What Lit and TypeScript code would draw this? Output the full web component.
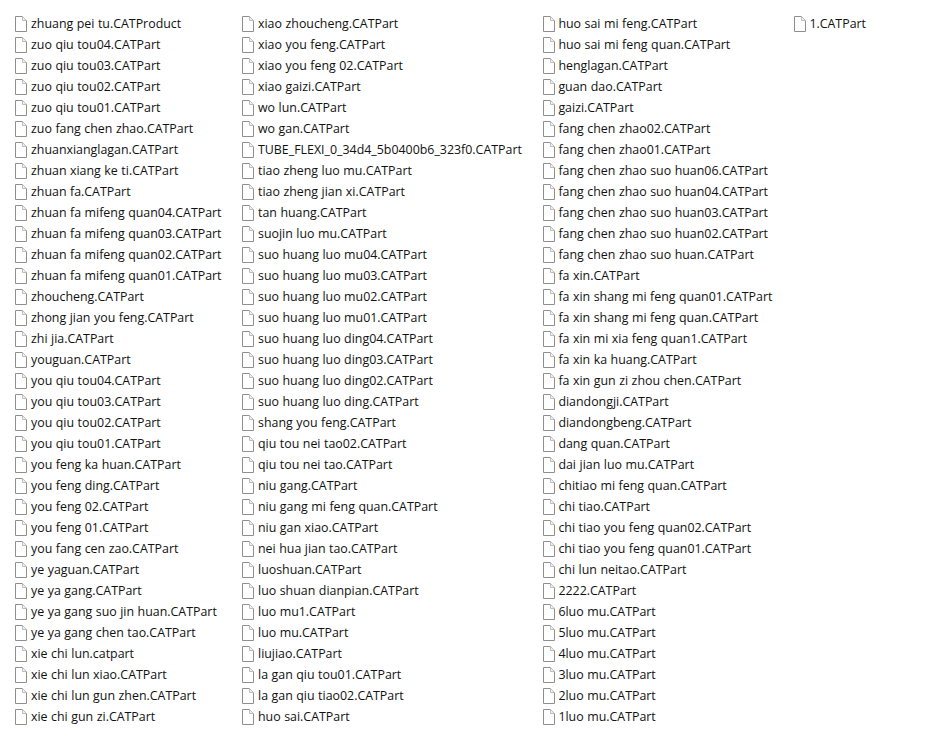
import { LitElement, html, css } from "lit";
import { customElement } from "lit/decorators.js";

const columns: string[][] = [
  ["zhuang pei tu.CATProduct","zuo qiu tou04.CATPart","zuo qiu tou03.CATPart","zuo qiu tou02.CATPart","zuo qiu tou01.CATPart","zuo fang chen zhao.CATPart","zhuanxianglagan.CATPart","zhuan xiang ke ti.CATPart","zhuan fa.CATPart","zhuan fa mifeng quan04.CATPart","zhuan fa mifeng quan03.CATPart","zhuan fa mifeng quan02.CATPart","zhuan fa mifeng quan01.CATPart","zhoucheng.CATPart","zhong jian you feng.CATPart","zhi jia.CATPart","youguan.CATPart","you qiu tou04.CATPart","you qiu tou03.CATPart","you qiu tou02.CATPart","you qiu tou01.CATPart","you feng ka huan.CATPart","you feng ding.CATPart","you feng 02.CATPart","you feng 01.CATPart","you fang cen zao.CATPart","ye yaguan.CATPart","ye ya gang.CATPart","ye ya gang suo jin huan.CATPart","ye ya gang chen tao.CATPart","xie chi lun.catpart","xie chi lun xiao.CATPart","xie chi lun gun zhen.CATPart","xie chi gun zi.CATPart"],
  ["xiao zhoucheng.CATPart","xiao you feng.CATPart","xiao you feng 02.CATPart","xiao gaizi.CATPart","wo lun.CATPart","wo gan.CATPart","TUBE_FLEXI_0_34d4_5b0400b6_323f0.CATPart","tiao zheng luo mu.CATPart","tiao zheng jian xi.CATPart","tan huang.CATPart","suojin luo mu.CATPart","suo huang luo mu04.CATPart","suo huang luo mu03.CATPart","suo huang luo mu02.CATPart","suo huang luo mu01.CATPart","suo huang luo ding04.CATPart","suo huang luo ding03.CATPart","suo huang luo ding02.CATPart","suo huang luo ding.CATPart","shang you feng.CATPart","qiu tou nei tao02.CATPart","qiu tou nei tao.CATPart","niu gang.CATPart","niu gang mi feng quan.CATPart","niu gan xiao.CATPart","nei hua jian tao.CATPart","luoshuan.CATPart","luo shuan dianpian.CATPart","luo mu1.CATPart","luo mu.CATPart","liujiao.CATPart","la gan qiu tou01.CATPart","la gan qiu tiao02.CATPart","huo sai.CATPart"],
  ["huo sai mi feng.CATPart","huo sai mi feng quan.CATPart","henglagan.CATPart","guan dao.CATPart","gaizi.CATPart","fang chen zhao02.CATPart","fang chen zhao01.CATPart","fang chen zhao suo huan06.CATPart","fang chen zhao suo huan04.CATPart","fang chen zhao suo huan03.CATPart","fang chen zhao suo huan02.CATPart","fang chen zhao suo huan.CATPart","fa xin.CATPart","fa xin shang mi feng quan01.CATPart","fa xin shang mi feng quan.CATPart","fa xin mi xia feng quan1.CATPart","fa xin ka huang.CATPart","fa xin gun zi zhou chen.CATPart","diandongji.CATPart","diandongbeng.CATPart","dang quan.CATPart","dai jian luo mu.CATPart","chitiao mi feng quan.CATPart","chi tiao.CATPart","chi tiao you feng quan02.CATPart","chi tiao you feng quan01.CATPart","chi lun neitao.CATPart","2222.CATPart","6luo mu.CATPart","5luo mu.CATPart","4luo mu.CATPart","3luo mu.CATPart","2luo mu.CATPart","1luo mu.CATPart"],
  ["1.CATPart"],
];

const fileIcon = html`<svg class="icon" width="12" height="16" viewBox="0 0 12 16">
  <path d="M0.5 0.5H7.5L11.5 4.5V15.5H0.5Z" fill="#fff" stroke="#8f8f8f" />
  <path d="M7.5 0.5V4.5H11.5" fill="#f1f1f1" stroke="#bdbdbd" />
</svg>`;

@customElement("app-root")
export class AppRoot extends LitElement {
  static styles = css`
    :host {
      display: block;
      width: 938px;
      height: 736px;
      background: #fff;
      overflow: hidden;
    }
    .list {
      display: grid;
      grid-template-columns: 227px 301px 251px 1fr;
      padding: 13px 0 0 15px;
    }
    .col {
      display: flex;
      flex-direction: column;
    }
    .row {
      display: flex;
      align-items: center;
      gap: 4px;
      height: 21px;
      white-space: nowrap;
      font-family: "Open Sans", "Noto Sans", sans-serif;
      font-size: 12.4px;
      word-spacing: 0.3px;
      color: #111;
    }
    .col:nth-child(n + 3) .row {
      gap: 3.4px;
    }
    .icon {
      flex: none;
    }
  `;

  render() {
    return html`<div class="list">
      ${columns.map(
        (c) => html`<div class="col">
          ${c.map((n) => html`<div class="row">${fileIcon}<span>${n}</span></div>`)}
        </div>`
      )}
    </div>`;
  }
}
